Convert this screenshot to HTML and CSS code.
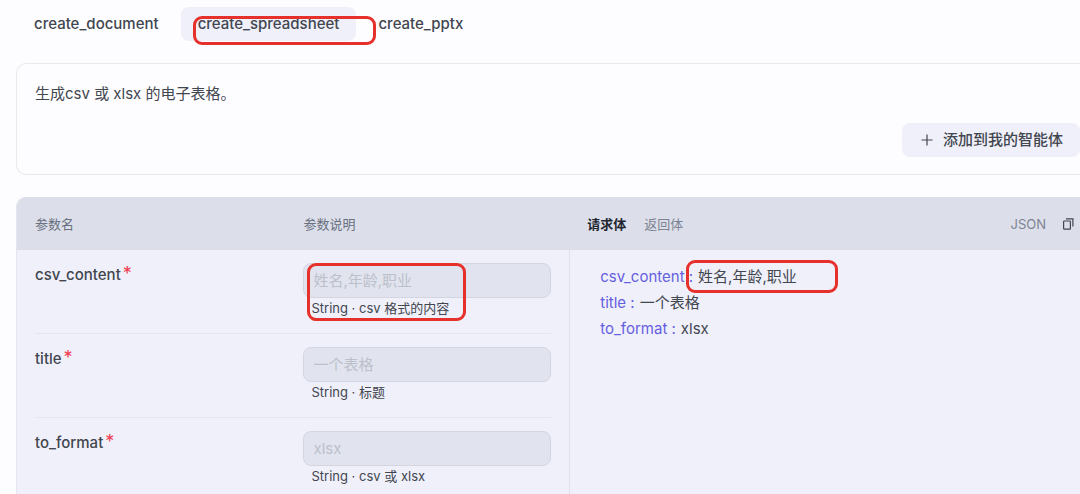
FILE: index.html
```
<!DOCTYPE html>
<html lang="zh-CN">
<head>
    <meta charset="UTF-8">
    <meta name="viewport" content="width=device-width, initial-scale=1.0">
    <title>create_spreadsheet</title>
    <link rel="stylesheet" href="styles.css">
</head>
<body>
    <nav class="tabs">
        <button class="tab" type="button">create_document</button>
        <button class="tab active" type="button">create_spreadsheet<span class="mark mark-tab"></span></button>
        <button class="tab" type="button">create_pptx</button>
    </nav>

    <section class="card">
        <p class="description">生成csv 或 xlsx 的电子表格。</p>
        <button class="add-button" type="button">
            <svg width="12" height="12" viewBox="0 0 12 12" fill="none" stroke="currentColor" stroke-width="1.2">
                <path d="M6 0.5V11.5M0.5 6H11.5"/>
            </svg>
            添加到我的智能体
        </button>
    </section>

    <main class="panel">
        <div class="params">
            <table>
                <thead>
                    <tr>
                        <th class="name-col">参数名</th>
                        <th>参数说明</th>
                    </tr>
                </thead>
                <tbody>
                    <tr>
                        <td><label for="csv-content">csv_content<span class="required">*</span></label></td>
                        <td>
                            <div class="field">
                                <input id="csv-content" type="text" placeholder="姓名,年龄,职业">
                                <p class="hint">String · csv 格式的内容</p>
                                <span class="mark mark-field"></span>
                            </div>
                        </td>
                    </tr>
                    <tr>
                        <td><label for="title">title<span class="required">*</span></label></td>
                        <td>
                            <div class="field">
                                <input id="title" type="text" placeholder="一个表格">
                                <p class="hint">String · 标题</p>
                            </div>
                        </td>
                    </tr>
                    <tr>
                        <td><label for="to-format">to_format<span class="required">*</span></label></td>
                        <td>
                            <div class="field">
                                <input id="to-format" type="text" placeholder="xlsx">
                                <p class="hint">String · csv 或 xlsx</p>
                            </div>
                        </td>
                    </tr>
                </tbody>
            </table>
        </div>

        <div class="preview">
            <div class="preview-head">
                <button class="body-tab active" type="button">请求体</button>
                <button class="body-tab" type="button">返回体</button>
                <span class="format">JSON</span>
                <button class="copy" type="button" aria-label="复制">
                    <svg width="12" height="12" viewBox="0 0 12 12" fill="none" stroke="currentColor" stroke-width="1.2">
                        <rect x="1.6" y="3" width="6.8" height="8.2" rx="0.8"/>
                        <path d="M4 0.9H10.9V8.6"/>
                    </svg>
                </button>
            </div>
            <div class="preview-body">
                <div class="line"><span class="key">csv_content :</span><span class="value">姓名,年龄,职业<span class="mark mark-value"></span></span></div>
                <div class="line"><span class="key">title :</span><span class="value">一个表格</span></div>
                <div class="line"><span class="key">to_format :</span><span class="value">xlsx</span></div>
            </div>
        </div>
    </main>
</body>
</html>
```
FILE: styles.css
```
* {
    box-sizing: border-box;
}

body {
    font-family: Inter, "Noto Sans CJK SC", sans-serif;
    font-size: 14px;
    line-height: 24px;
    color: #42464f;
    background-color: #fdfdff;
    display: flex;
    flex-direction: column;
    min-height: 100vh;
    margin: 0;
    padding: 7px 0 0 16px;
}

p {
    margin: 0;
}

button {
    font: inherit;
    color: inherit;
    background: none;
    border: none;
    padding: 0;
    cursor: pointer;
}

.tabs {
    display: flex;
    gap: 5px;
    padding-left: 1px;
    margin-bottom: 22px;
}

.tab {
    position: relative;
    height: 34px;
    padding: 0 17px;
    font-size: 15px;
    font-weight: 500;
    border-radius: 8px;
}

.tab.active {
    background-color: #f0f0fa;
}

.card {
    display: flex;
    flex-direction: column;
    gap: 17px;
    padding: 18px 0 17px 18px;
    margin-bottom: 22px;
    border: 1px solid #e8e9ef;
    border-right: none;
    border-radius: 10px 0 0 10px;
}

.description {
    font-size: 15px;
}

.add-button {
    display: flex;
    align-items: center;
    align-self: flex-end;
    gap: 10px;
    height: 34px;
    padding: 0 17px 0 19px;
    font-size: 15px;
    font-weight: 500;
    background-color: #f0f0fa;
    border-radius: 8px;
}

/* header strip runs across both columns */
.panel {
    flex: 1;
    display: grid;
    grid-template-columns: 52fr 48fr;
    background: linear-gradient(#dcdfea 53px, #f0f0fa 53px);
    box-shadow: inset 1px 0 #e3e5ef;
    border-radius: 10px 0 0 0;
}

.params {
    padding: 0 18px 0 19px;
}

table {
    width: 100%;
    border-collapse: collapse;
    table-layout: fixed;
}

th {
    height: 53px;
    padding: 0;
    font-size: 13px;
    font-weight: 400;
    text-align: left;
    color: #697080;
}

.name-col {
    width: 52%;
}

td {
    padding: 13px 0 14px;
    vertical-align: top;
    border-bottom: 1px solid #e3e5ef;
}

label {
    font-size: 15px;
    font-weight: 500;
}

.required {
    margin-left: 2px;
    font-size: 18px;
    font-weight: 400;
    line-height: 1;
    color: #ee3d51;
}

.field {
    position: relative;
}

input {
    display: block;
    width: 100%;
    height: 35px;
    padding: 0 9px;
    font: inherit;
    font-size: 15px;
    color: inherit;
    background-color: #e1e4ee;
    border: 1px solid #d3d6e1;
    border-radius: 8px;
}

input::placeholder {
    color: #bcc0cb;
}

.hint {
    padding-left: 8px;
    font-size: 13px;
    line-height: 21px;
}

.preview {
    display: flex;
    flex-direction: column;
}

.preview-head {
    display: flex;
    align-items: center;
    height: 53px;
    padding: 0 6px 0 18px;
    font-size: 13px;
    color: #7d8392;
}

.body-tab {
    margin-right: 18px;
}

.body-tab.active {
    font-weight: 700;
    color: #22262f;
}

.format {
    margin-left: auto;
}

.copy {
    display: flex;
    margin-left: 16px;
    color: #42464f;
}

.preview-body {
    flex: 1;
    padding: 14px 0 0 30px;
    font-size: 15px;
    line-height: 26px;
    border-left: 1px solid #dfe1eb;
}

.line {
    display: flex;
    gap: 5px;
}

.key {
    color: #655ee0;
}

.value {
    position: relative;
}

/* red highlight frames */
.mark {
    position: absolute;
    border: 3px solid #e6302b;
    border-radius: 9px;
    pointer-events: none;
}

.mark-tab {
    top: 9px;
    left: 12px;
    right: -20px;
    height: 29px;
}

.mark-field {
    top: 0;
    left: 4px;
    width: 159px;
    height: 58px;
}

.mark-value {
    top: -4px;
    left: -12px;
    width: 152px;
    height: 33px;
}
```
